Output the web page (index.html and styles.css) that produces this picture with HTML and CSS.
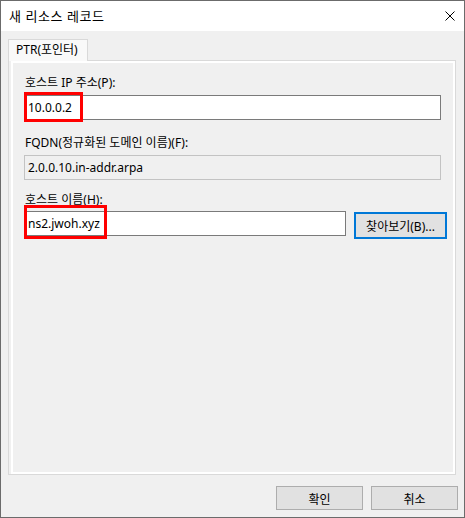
FILE: index.html
```html
<!DOCTYPE html>
<html lang="ko">
<head>
<meta charset="utf-8">
<title>새 리소스 레코드</title>
<link rel="stylesheet" href="styles.css">
</head>
<body>
<div class="window">
  <div class="titlebar">
    <span class="title">새 리소스 레코드</span>
    <span class="close">
      <svg width="10" height="10" viewBox="0 0 10 10"><path d="M0.5 0.5 L9.5 9.5 M9.5 0.5 L0.5 9.5" stroke="#000" stroke-width="1" fill="none"/></svg>
    </span>
  </div>
  <div class="client">
    <div class="tabs"><div class="tab">PTR(포인터)</div></div>
    <div class="page">
      <div class="page-inner">
        <div class="label first">호스트 IP 주소(P):</div>
        <div class="field-wrap">
          <div class="edit wide">10.0.0.2</div>
          <div class="mark mark-ip"></div>
        </div>
        <div class="label second">FQDN(정규화된 도메인 이름)(F):</div>
        <div class="edit wide readonly">2.0.0.10.in-addr.arpa</div>
        <div class="label third">호스트 이름(H):</div>
        <div class="row">
          <div class="field-wrap">
            <div class="edit narrow">ns2.jwoh.xyz</div>
            <div class="mark mark-host"></div>
          </div>
          <div class="btn browse">찾아보기(B)...</div>
        </div>
      </div>
    </div>
    <div class="buttons">
      <div class="btn action">확인</div>
      <div class="btn action">취소</div>
    </div>
  </div>
</div>
</body>
</html>
```
FILE: styles.css
```css
* { box-sizing: border-box; }
html, body { margin: 0; padding: 0; }
body {
  width: 465px;
  height: 518px;
  font-family: "Noto Sans", "Noto Sans CJK KR", sans-serif;
  font-size: 12px;
  color: #000;
}
.window {
  width: 465px;
  height: 518px;
  border: 1px solid #6b6b6b;
  background: #f0f0f0;
  display: flex;
  flex-direction: column;
}
.titlebar {
  height: 30px;
  background: #fff;
  display: flex;
  align-items: center;
  justify-content: space-between;
  padding: 0 9px 0 8px;
  flex: none;
}
.title {
  font-family: "Noto Sans CJK KR", sans-serif;
  font-size: 13px;
  letter-spacing: 0.5px;
  line-height: 16px;
}
.close { display: flex; width: 10px; height: 10px; }
.client {
  flex: 1;
  padding: 8px 8px 0 7px;
  display: flex;
  flex-direction: column;
}
.tabs { display: flex; height: 21px; flex: none; }
.tab {
  width: 80px;
  height: 22px;
  border: 1px solid #d9d9d9;
  border-bottom: none;
  background: #f9f9f9;
  padding-left: 7px;
  line-height: 20px;
  position: relative;
  z-index: 1;
  white-space: nowrap;
}
.page {
  height: 415px;
  border: 1px solid #d9d9d9;
  padding-left: 2px;
  flex: none;
}
.page-inner {
  height: 100%;
  border: 2px solid #fff;
  background: #f0f0f0;
  padding: 0 0 0 11px;
}
.label { line-height: 16px; padding-left: 1px; white-space: nowrap; }
.label.first { margin-top: 12px; margin-bottom: 4px; }
.label.second { margin-top: 15px; margin-bottom: 4px; }
.label.third { margin-top: 12px; margin-bottom: 3px; }
.field-wrap { position: relative; }
.edit {
  height: 25px;
  border: 1px solid #7a7a7a;
  background: #fff;
  padding-left: 3px;
  line-height: 23px;
  white-space: nowrap;
}
.edit.wide { width: 417px; }
.edit.narrow { width: 322px; }
.edit.readonly { background: #f0f0f0; border-color: #c3c3c3; }
.mark {
  position: absolute;
  left: 0;
  border: 3px solid #f00;
}
.mark-ip { top: -3px; width: 59px; height: 30px; }
.mark-host { top: -6px; width: 83px; height: 34px; }
.row { display: flex; align-items: flex-start; gap: 8px; }
.btn {
  background: #e1e1e1;
  border: 1px solid #adadad;
  display: flex;
  align-items: center;
  justify-content: center;
  font-family: "Noto Sans CJK KR", sans-serif;
  white-space: nowrap;
}
.browse {
  width: 93px;
  height: 27px;
  margin-top: 1px;
  border: 2px solid #0078d7;
  font-family: "Noto Sans", "Noto Sans CJK KR", sans-serif;
}
.buttons {
  display: flex;
  justify-content: flex-end;
  gap: 8px;
  margin-top: 11px;
  margin-right: -2px;
}
.action { width: 87px; height: 24px; }
```
